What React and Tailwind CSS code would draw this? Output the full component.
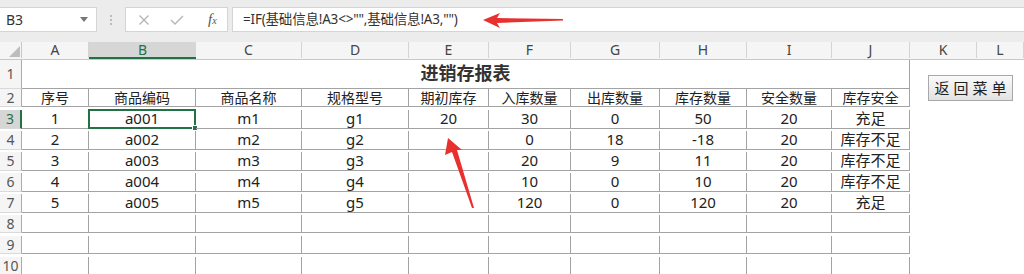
import React from "react";

const COLS =
  "grid grid-cols-[22px_67px_107px_106px_107px_80px_82px_89px_87px_85px_78px_67px_1fr]";

const LETTERS = ["A", "B", "C", "D", "E", "F", "G", "H", "I", "J", "K", "L"];

const HEAD = ["序号", "商品编码", "商品名称", "规格型号", "期初库存", "入库数量", "出库数量", "库存数量", "安全数量", "库存安全"];

const DATA = [
  ["1", "a001", "m1", "g1", "20", "30", "0", "50", "20", "充足"],
  ["2", "a002", "m2", "g2", "", "0", "18", "-18", "20", "库存不足"],
  ["3", "a003", "m3", "g3", "", "20", "9", "11", "20", "库存不足"],
  ["4", "a004", "m4", "g4", "", "10", "0", "10", "20", "库存不足"],
  ["5", "a005", "m5", "g5", "", "120", "0", "120", "20", "充足"],
];

function RowNum({ n, active }) {
  return (
    <div
      className={
        "flex items-center justify-center border-b border-[#d9d9d9] text-[14px] leading-none " +
        (active
          ? "bg-[#d6d6d6] text-[#217346] border-r-2 border-r-[#217346]"
          : "bg-[#f5f5f5] text-[#555] border-r border-r-[#ababab]")
      }
    >
      {n}
    </div>
  );
}

function Blank() {
  return <div className="bg-white" />;
}

function SheetRow({ n, cells, header }) {
  return (
    <div className={COLS + " h-[21px]"}>
      <RowNum n={n} active={n === 3} />
      {cells.map((v, i) => (
        <div
          key={i}
          className={
            "relative flex items-center justify-center border-r border-b border-[#a3a3a3] text-[#222] leading-none " +
            (header ? "text-[14px]" : "text-[15px]")
          }
        >
          {v}
          {n === 3 && i === 1 && (
            <div className="absolute -left-px -top-px right-[-1px] bottom-[-1px] border-2 border-[#217346]">
              <div className="absolute -right-[4px] -bottom-[4px] w-[6px] h-[6px] bg-[#217346] border border-white" />
            </div>
          )}
        </div>
      ))}
      <Blank />
      <Blank />
      <Blank />
    </div>
  );
}

export default function App() {
  const rows = [HEAD, ...DATA, ...Array.from({ length: 4 }, () => Array(10).fill(""))];

  return (
    <div className="relative w-[1024px] h-[274px] overflow-hidden bg-white font-['Noto_Sans','Noto_Sans_CJK_SC',sans-serif]">
      {/* formula bar */}
      <div className="flex h-[42px] bg-[#ececec] pt-[7px] pb-[10px]">
        <div className="flex w-[97px] items-center justify-between bg-white border border-[#d4d4d4] border-l-0 pl-[6px] pr-[8px]">
          <span className="text-[14px] text-[#333]">B3</span>
          <span className="w-0 h-0 border-l-[4px] border-r-[4px] border-t-[5px] border-l-transparent border-r-transparent border-t-[#777]" />
        </div>
        <div className="flex w-[28px] flex-col items-center justify-center gap-[2px]">
          <span className="w-[2px] h-[2px] bg-[#bbb]" />
          <span className="w-[2px] h-[2px] bg-[#bbb]" />
          <span className="w-[2px] h-[2px] bg-[#bbb]" />
        </div>
        <div className="flex w-[103px] items-center bg-white border border-[#d4d4d4] pl-[12px] gap-[20px]">
          <svg width="12" height="12" viewBox="0 0 12 12">
            <path d="M1.5 1.5 L10.5 10.5 M10.5 1.5 L1.5 10.5" stroke="#b5b5b5" strokeWidth="1.4" fill="none" />
          </svg>
          <svg width="14" height="12" viewBox="0 0 14 12">
            <path d="M1 6 L5 10 L13 2" stroke="#b5b5b5" strokeWidth="1.4" fill="none" />
          </svg>
          <span className="ml-[4px] font-['Liberation_Serif',serif] italic text-[15px] leading-none text-[#555]">
            f<span className="text-[10px]">x</span>
          </span>
        </div>
        <div className="ml-[4px] flex flex-1 items-center bg-white border border-[#d4d4d4] border-r-0 pl-[10px]">
          <span className="text-[13.5px] text-[#333] tracking-[-0.2px]">=IF(基础信息!A3&lt;&gt;"",基础信息!A3,"")</span>
        </div>
      </div>

      {/* column headers */}
      <div className={COLS + " h-[18px] bg-[#f5f5f5] border-b border-[#c8c8c8]"}>
        <div className="relative border-r border-[#c8c8c8]">
          <svg className="absolute left-[9px] top-[4px]" width="11" height="11" viewBox="0 0 11 11">
            <polygon points="11,0 11,11 0,11" fill="#bdbdbd" />
          </svg>
        </div>
        {LETTERS.map((l) => (
          <div
            key={l}
            className={
              "flex items-center justify-center text-[14px] leading-none " +
              (l === "B"
                ? "bg-[#d6d6d6] text-[#217346] border-b-2 border-[#217346] -mb-px"
                : "text-[#444] border-r border-[#d4d4d4]")
            }
          >
            {l}
          </div>
        ))}
        <div />
      </div>

      {/* row 1 */}
      <div className={COLS + " h-[29px]"}>
        <RowNum n={1} />
        <div className="col-span-10 flex items-center justify-center border-r border-b border-[#a3a3a3] text-[18px] font-bold text-[#333]">
          进销存报表
        </div>
        <Blank />
        <Blank />
        <Blank />
      </div>

      {rows.map((cells, i) => (
        <SheetRow key={i} n={i + 2} cells={cells} header={i === 0} />
      ))}

      {/* form button */}
      <button className="absolute left-[928px] top-[75px] w-[85px] h-[26px] whitespace-nowrap border border-[#a8a8a8] bg-gradient-to-b from-[#fafafa] to-[#e2e2e2] pl-[4px] text-[15px] text-[#222] tracking-[4px] leading-none">
        返回菜单
      </button>

      {/* red annotation arrows */}
      <svg className="absolute left-0 top-0 pointer-events-none" width="1024" height="274">
        <polygon points="483,20 500,13 497,18 563,19 563,20.5 497,23 500,28" fill="#e8302f" />
        <polygon points="448,138 462,150 457,150 474,208 472,208 452,152 445,155" fill="#e8302f" />
      </svg>
    </div>
  );
}
